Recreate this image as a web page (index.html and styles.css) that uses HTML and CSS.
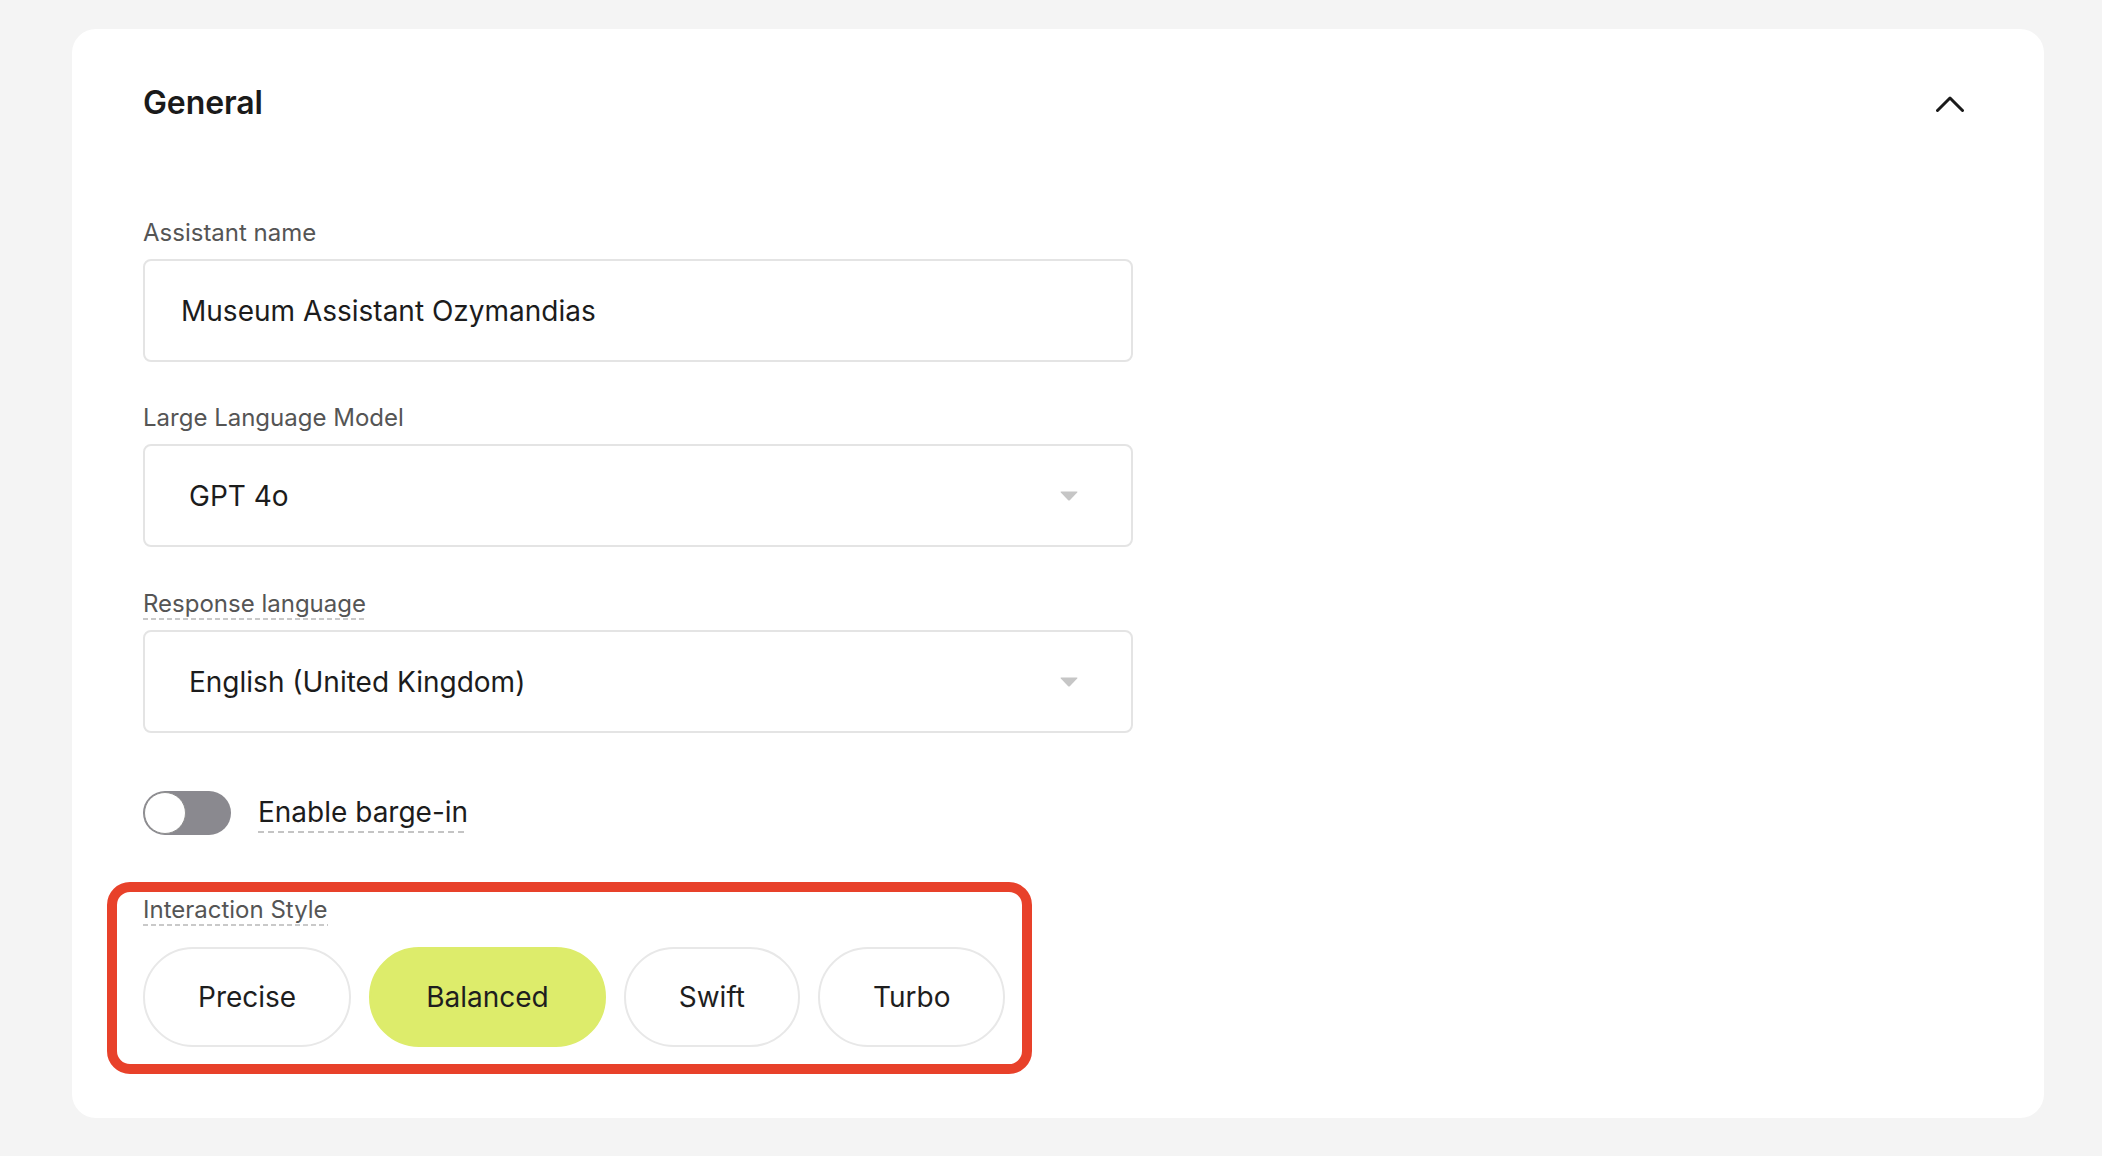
FILE: index.html
```html
<!DOCTYPE html>
<html lang="en">
<head>
<meta charset="utf-8">
<title>General settings</title>
<link rel="stylesheet" href="styles.css">
</head>
<body>
<section class="card">
  <header class="card-header">
    <h2 class="card-title">General</h2>
    <button class="collapse-btn" aria-label="Collapse">
      <svg width="28" height="16" viewBox="0 0 28 16" aria-hidden="true"><path d="M1.5 14.5 L14 2 L26.5 14.5" fill="none" stroke="#1a1a1a" stroke-width="3" stroke-linecap="round" stroke-linejoin="round"/></svg>
    </button>
  </header>

  <div class="form">
    <div class="field">
      <label class="field-label">Assistant name</label>
      <div class="text-input">Museum Assistant Ozymandias</div>
    </div>

    <div class="field field-gap">
      <label class="field-label">Large Language Model</label>
      <div class="select">
        <span>GPT 4o</span>
        <svg class="caret" width="18" height="10" viewBox="0 0 18 10" aria-hidden="true"><path d="M1.2 0.5 H16.8 Q18 0.5 17.2 1.4 L9.8 9.2 Q9 10 8.2 9.2 L0.8 1.4 Q0 0.5 1.2 0.5 Z" fill="#c6c6c6"/></svg>
      </div>
    </div>

    <div class="field field-gap-tip">
      <div class="label-row"><span class="tip-label">Response language</span></div>
      <div class="select">
        <span>English (United Kingdom)</span>
        <svg class="caret" width="18" height="10" viewBox="0 0 18 10" aria-hidden="true"><path d="M1.2 0.5 H16.8 Q18 0.5 17.2 1.4 L9.8 9.2 Q9 10 8.2 9.2 L0.8 1.4 Q0 0.5 1.2 0.5 Z" fill="#c6c6c6"/></svg>
      </div>
    </div>

    <div class="toggle-row">
      <span class="toggle"><span class="knob"></span></span>
      <span class="toggle-label">Enable barge-in</span>
    </div>

    <div class="style-group">
      <div class="label-row"><span class="tip-label">Interaction Style</span></div>
      <div class="pills">
        <button class="pill">Precise</button>
        <button class="pill pill-active">Balanced</button>
        <button class="pill">Swift</button>
        <button class="pill">Turbo</button>
      </div>
    </div>
  </div>
</section>
</body>
</html>
```
FILE: styles.css
```css
* { box-sizing: border-box; }

html, body {
  margin: 0;
  padding: 0;
  background: #f4f4f4;
}

body {
  font-family: "Inter", "Open Sans", sans-serif;
  color: #1c1c1c;
  padding-top: 29px;
}

.card {
  margin: 0 58px 0 72px;
  background: #ffffff;
  border-radius: 24px;
  padding: 54px 80px 71px 71px;
}

.card-header {
  display: flex;
  align-items: center;
  justify-content: space-between;
  height: 40px;
}

.card-title {
  margin: 0;
  font-size: 32px;
  line-height: 40px;
  font-weight: 560;
  color: #1a1a1a;
  letter-spacing: -0.1px;
}

.collapse-btn {
  border: 0;
  background: none;
  padding: 0;
  display: flex;
  margin-top: 2px;
}

.form {
  width: 990px;
  margin-top: 94px;
}

.field-label {
  display: block;
  font-size: 24px;
  line-height: 32px;
  color: #555555;
  margin-bottom: 10px;
}

.field-gap { margin-top: 40px; }
.field-gap-tip { margin-top: 43px; }

.label-row {
  margin-bottom: 10px;
  line-height: 0;
}

.tip-label {
  display: inline-block;
  font-size: 24px;
  line-height: 28px;
  color: #555555;
  padding-bottom: 2px;
  background-image: repeating-linear-gradient(to right, #c9c9c9 0 5px, transparent 5px 8px);
  background-size: 100% 2px;
  background-position: left bottom;
  background-repeat: no-repeat;
}

.text-input,
.select {
  height: 103px;
  border: 2px solid #e4e4e4;
  border-radius: 8px;
  display: flex;
  align-items: center;
  font-size: 28px;
  color: #1c1c1c;
}

.text-input {
  padding-left: 36px;
}

.select {
  padding-left: 44px;
  padding-right: 53px;
  justify-content: space-between;
}

.caret { display: block; margin-top: 1px; }

.toggle-row {
  display: flex;
  align-items: flex-start;
  margin-top: 58px;
}

.toggle {
  position: relative;
  width: 88px;
  height: 44px;
  border-radius: 22px;
  background: #8a898f;
  flex: none;
}

.knob {
  position: absolute;
  left: 1px;
  top: 1px;
  width: 42px;
  height: 42px;
  border-radius: 50%;
  background: #ffffff;
  border: 1.5px solid #8f8f8f;
}

.toggle-label {
  margin-left: 27px;
  margin-top: 5px;
  font-size: 28px;
  line-height: 32px;
  color: #1c1c1c;
  padding-bottom: 5px;
  background-image: repeating-linear-gradient(to right, #c4c4c4 0 6px, transparent 6px 10px);
  background-size: 100% 2px;
  background-position: left bottom;
  background-repeat: no-repeat;
}

.style-group {
  position: relative;
  width: fit-content;
  margin-top: 61px;
}

.style-group::before {
  content: "";
  position: absolute;
  left: -36px;
  top: -14px;
  right: -27px;
  bottom: -27px;
  border: 10px solid #e8412a;
  border-radius: 23px;
  pointer-events: none;
}

.pills {
  display: flex;
  gap: 18px;
  margin-top: 21px;
}

.pill {
  height: 100px;
  padding: 0 53px;
  border: 2px solid #e8e8e8;
  border-radius: 50px;
  background: #ffffff;
  font-family: "Inter", "Open Sans", sans-serif;
  font-size: 28px;
  color: #1e1e1e;
}

.pill-active {
  padding: 0 55px;
  background: #ddec6b;
  border-color: #ddec6b;
}
```
